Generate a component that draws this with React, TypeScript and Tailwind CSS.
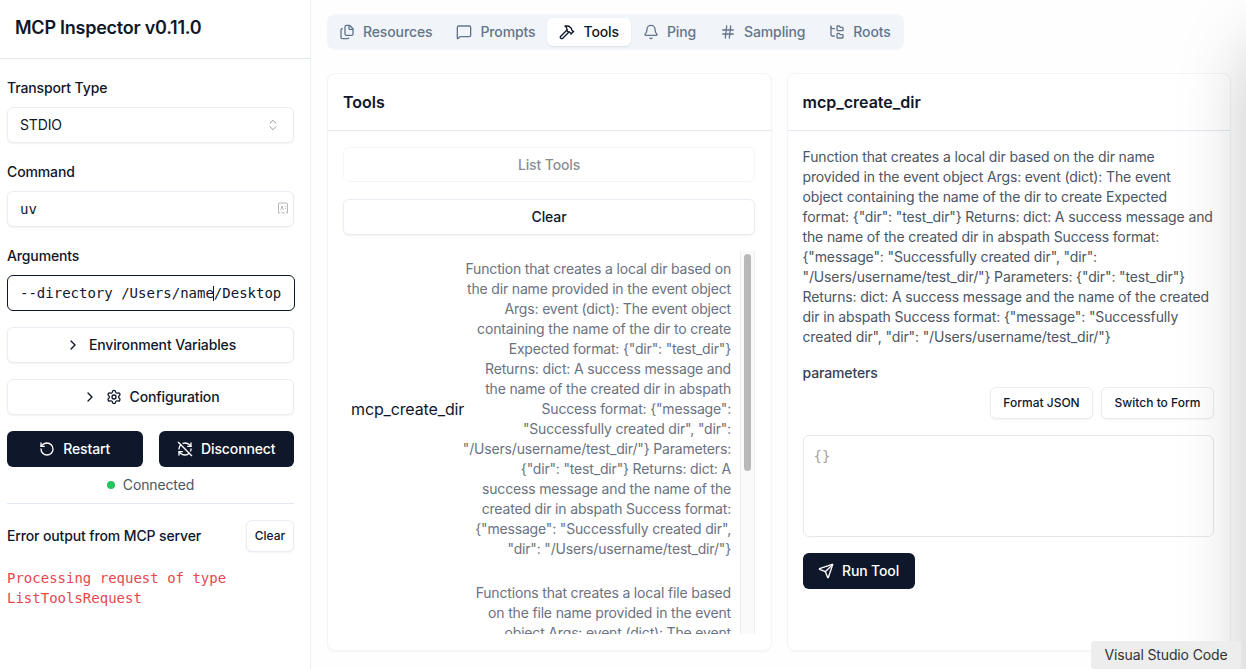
import {
  Bell,
  ChevronRight,
  ChevronsUpDown,
  Files,
  FolderTree,
  Hammer,
  Hash,
  MessageSquare,
  RefreshCwOff,
  RotateCcw,
  Send,
  Settings,
} from 'lucide-react';

const DESCRIPTION =
  'Function that creates a local dir based on the dir name provided in the event object Args: event (dict): The event object containing the name of the dir to create Expected format: {"dir": "test_dir"} Returns: dict: A success message and the name of the created dir in abspath Success format: {"message": "Successfully created dir", "dir": "/Users/username/test_dir/"} Parameters: {"dir": "test_dir"} Returns: dict: A success message and the name of the created dir in abspath Success format: {"message": "Successfully created dir", "dir": "/Users/username/test_dir/"}';

// The list column breaks its lines where the reference does
const DIR_LINES = [
  'Function that creates a local dir based on',
  'the dir name provided in the event object',
  'Args: event (dict): The event object',
  'containing the name of the dir to create',
  'Expected format: {"dir": "test_dir"}',
  'Returns: dict: A success message and',
  'the name of the created dir in abspath',
  'Success format: {"message":',
  '"Successfully created dir", "dir":',
  '"/Users/username/test_dir/"} Parameters:',
  '{"dir": "test_dir"} Returns: dict: A',
  'success message and the name of the',
  'created dir in abspath Success format:',
  '{"message": "Successfully created dir",',
  '"dir": "/Users/username/test_dir/"}',
];

const FILE_LINES = [
  'Functions that creates a local file based',
  'on the file name provided in the event',
  'object Args: event (dict): The event',
  'object containing the name of the file to',
  'create Expected format: {"file": "test"}',
  'Returns: dict: A success message and',
  'the name of the created file in abspath',
  'Success format: {"message":',
  '"Successfully created file", "file":',
  '"/Users/username/test_file"} Parameters:',
  '{"file": "test"} Returns: dict: A',
  'success message and the name of the',
  'created file in abspath Success format:',
  '{"message": "Successfully created file",',
  '"file": "/Users/username/test_file"}',
];

const TABS = [
  { label: 'Resources', icon: Files },
  { label: 'Prompts', icon: MessageSquare },
  { label: 'Tools', icon: Hammer, active: true },
  { label: 'Ping', icon: Bell },
  { label: 'Sampling', icon: Hash },
  { label: 'Roots', icon: FolderTree },
];

function OutlineButton({ children, className = '' }: { children: React.ReactNode; className?: string }) {
  return (
    <button className={`flex items-center justify-center rounded-md border border-[#e8edf3] bg-white font-medium text-[#0f172a] shadow-[0_1px_2px_rgba(0,0,0,0.05)] ${className}`}>
      {children}
    </button>
  );
}

function Sidebar() {
  return (
    <aside className="flex w-[311px] shrink-0 flex-col border-r border-[#e9eef4] bg-white">
      <div className="flex h-[59px] shrink-0 items-center border-b border-[#e2e8f0] pb-[3px] pl-[15px]">
        <h1 className="text-lg font-semibold tracking-[-0.24px] text-[#0f172a]">MCP Inspector v0.11.0</h1>
      </div>

      <div className="flex flex-col px-[7px] pt-[19px]">
        <label className="mb-[9px] h-5 text-sm leading-5 font-medium text-[#0f172a]">Transport Type</label>
        <div className="mb-[19px] flex h-9 w-[287px] items-center justify-between rounded-md border border-[#e8edf3] bg-white pr-[13px] pl-[12px] text-sm text-[#0f172a] shadow-[0_1px_2px_rgba(0,0,0,0.05)]">
          <span>STDIO</span>
          <ChevronsUpDown strokeWidth={1.5} className="h-[14px] w-[14px] text-[#0f172a] opacity-50" />
        </div>

        <label className="mb-[9px] h-5 text-sm leading-5 font-medium text-[#0f172a]">Command</label>
        <div className="relative mb-[19px] h-9 w-[287px]">
          <input
            readOnly
            value="uv"
            className="h-full w-full rounded-md border border-[#e8edf3] bg-white pl-[12px] font-['DejaVu_Sans_Mono',monospace] text-sm tracking-normal text-[#0f172a] shadow-[0_1px_2px_rgba(0,0,0,0.05)] outline-none"
          />
          <svg viewBox="0 0 12 12" className="absolute top-[11px] right-[5px] h-3 w-3" fill="none" stroke="#a3a3a3" strokeWidth="0.8">
            <path d="M1.5 10.5V2a1 1 0 0 1 1-1h7a1 1 0 0 1 1 1v8.5" />
            <path d="M1 10.8h2M9 10.8h2M4.5 10.8h3" />
            <circle cx="5" cy="5" r="1" fill="#a3a3a3" stroke="none" />
            <path d="M3.5 8c.2-1 .8-1.5 1.5-1.5S6.300 7 6.500 8" />
            <path d="M8 4.500h1M8 6.500h1" />
          </svg>
        </div>

        <label className="mb-[9px] h-5 text-sm leading-5 font-medium text-[#0f172a]">Arguments</label>
        <div className="relative mb-4 h-9 w-[288px]">
          <input
            readOnly
            value="--directory /Users/name/Desktop"
            className="h-full w-full rounded-md border border-[#0f172a] bg-white pl-[12px] font-['DejaVu_Sans_Mono',monospace] text-sm tracking-normal text-[#0f172a] outline-none"
          />
          <span className="absolute top-[11px] left-[206px] h-[15px] w-px bg-[#0f172a]" />
        </div>

        <OutlineButton className="mb-4 h-9 w-[287px] gap-2 text-sm">
          <ChevronRight className="h-4 w-4" />
          Environment Variables
        </OutlineButton>
        <OutlineButton className="mb-4 h-9 w-[287px] gap-2 text-sm">
          <ChevronRight className="h-4 w-4" />
          <Settings className="h-4 w-4" />
          Configuration
        </OutlineButton>

        <div className="flex w-[287px] gap-4">
          <button className="flex h-9 flex-1 items-center justify-center gap-2 rounded-md bg-[#0f172a] text-sm font-medium text-white">
            <RotateCcw className="h-4 w-4" />
            Restart
          </button>
          <button className="flex h-9 flex-1 items-center justify-center gap-2 rounded-md bg-[#0f172a] text-sm font-medium text-white">
            <RefreshCwOff className="h-4 w-4" />
            Disconnect
          </button>
        </div>

        <div className="mt-2 flex h-5 w-[287px] items-center justify-center gap-2 text-sm text-[#4b5563]">
          <span className="h-2 w-2 rounded-full bg-[#22c55e]" />
          Connected
        </div>

        <div className="mt-2 w-[287px] border-t border-[#e2e8f0] pt-4">
          <div className="flex items-center justify-between">
            <span className="text-sm font-medium text-[#0f172a]">Error output from MCP server</span>
            <OutlineButton className="h-8 w-12 text-xs tracking-normal">Clear</OutlineButton>
          </div>
          <p className="mt-4 font-['DejaVu_Sans_Mono',monospace] text-sm leading-5 tracking-normal text-[#e5484d]">
            Processing request of type ListToolsRequest
          </p>
        </div>
      </div>
    </aside>
  );
}

function TabBar() {
  return (
    <div className="flex h-9 w-[577px] items-center rounded-lg bg-[#f1f5f9] tracking-[-0.12px]">
      {TABS.map(({ label, icon: Icon, active }) => (
        <div
          key={label}
          className={`flex h-7 items-center gap-2 rounded-md px-3 text-sm font-medium ${
            active ? 'bg-white text-[#0f172a] shadow-[0_1px_2px_rgba(0,0,0,0.08)]' : 'text-[#64748b]'
          }`}
        >
          <Icon className="h-4 w-4" />
          {label}
        </div>
      ))}
    </div>
  );
}

function Card({ title, headerClass, className = '', children }: { title: string; headerClass: string; className?: string; children: React.ReactNode }) {
  return (
    <section className={`flex h-[578px] flex-col overflow-hidden rounded-lg border border-[#f1f4f8] bg-white shadow-[0_1px_2px_rgba(0,0,0,0.04)] ${className}`}>
      <div className={`flex h-[57px] shrink-0 items-center border-b border-[#e2e8f0] ${headerClass}`}>
        <h3 className="text-base font-semibold tracking-normal text-[#0f172a]">{title}</h3>
      </div>
      {children}
    </section>
  );
}

function ToolRow({ name, lines }: { name: string; lines: string[] }) {
  return (
    <div className="flex items-center pr-[9px] pb-6 pl-2">
      <span className="w-[110px] shrink-0 text-base whitespace-nowrap text-[#0f172a]">{name}</span>
      <p className="ml-auto shrink-0 text-right text-sm leading-5 tracking-[-0.17px] text-[#6b7280]">
        {lines.map((line) => (
          <span key={line} className="block whitespace-nowrap">
            {line}
          </span>
        ))}
      </p>
    </div>
  );
}

function ToolsCard() {
  return (
    <Card title="Tools" headerClass="pl-[15px]" className="w-[445px]">
      <div className="flex min-h-0 flex-1 flex-col pt-4 pr-4 pl-[15px]">
        <button className="h-[35px] w-full shrink-0 rounded-md border border-[#e8edf3] bg-white text-sm font-medium text-[#0f172a] opacity-50">
          List Tools
        </button>
        <OutlineButton className="mt-[17px] h-9 w-full shrink-0 text-sm">Clear</OutlineButton>
        <div className="mt-4 mb-4 flex min-h-0 flex-1">
          <div className="min-w-0 flex-1 overflow-hidden pt-2">
            <ToolRow name="mcp_create_dir" lines={DIR_LINES} />
            <ToolRow name="mcp_create_file" lines={FILE_LINES} />
          </div>
          <div className="w-[15px] shrink-0 border-x border-[#eeeeee] bg-[#fafafa] px-[3px] pt-[3px]">
            <div className="h-[217px] rounded-full bg-[#b8b8b8]" />
          </div>
        </div>
      </div>
    </Card>
  );
}

function DetailCard() {
  return (
    <Card title="mcp_create_dir" headerClass="pl-[14.5px]" className="w-[444px]">
      <div className="flex flex-col pt-4 pr-4 pl-[14.5px]">
        <p className="text-sm leading-5 text-[#4b5563]">{DESCRIPTION}</p>
        <label className="mt-4 h-5 text-sm leading-5 font-medium text-[#374151]">parameters</label>
        <div className="mt-1 flex justify-end gap-2">
          <OutlineButton className="h-8 w-[103px] text-xs tracking-normal">Format JSON</OutlineButton>
          <OutlineButton className="h-8 w-[113px] text-xs tracking-normal">Switch to Form</OutlineButton>
        </div>
        <textarea
          readOnly
          placeholder="{}"
          className="mt-4 h-[102px] resize-none rounded-md border border-[#e5e7eb] bg-white px-[10px] py-[10px] font-['DejaVu_Sans_Mono',monospace] text-sm tracking-normal text-[#0f172a] outline-none placeholder:text-[#a3a3a3]"
        />
        <button className="mt-4 flex h-9 w-[112px] items-center justify-center gap-2 rounded-md bg-[#0f172a] text-sm font-medium text-white">
          <Send className="h-4 w-4" />
          Run Tool
        </button>
      </div>
    </Card>
  );
}

export default function App() {
  return (
    <div className="relative flex h-[669px] w-[1246px] overflow-hidden bg-white font-['Inter',sans-serif] tracking-[-0.13px]">
      <Sidebar />
      <main className="flex flex-1 flex-col bg-[#fefefe] pt-[14px] pl-4">
        <TabBar />
        <div className="mt-[23px] flex gap-[15px]">
          <ToolsCard />
          <DetailCard />
        </div>
      </main>

      {/* Shadow from the window off to the right */}
      <div className="absolute top-[50px] left-[1256px] h-[800px] w-[300px] shadow-[0_0_70px_rgba(0,0,0,0.28)]" />

      <div className="absolute top-[641px] left-[1091px] flex h-[28px] w-[150px] items-center justify-center rounded-[3px] bg-[#ededed] text-sm text-[#333333]">
        Visual Studio Code
      </div>
    </div>
  );
}
